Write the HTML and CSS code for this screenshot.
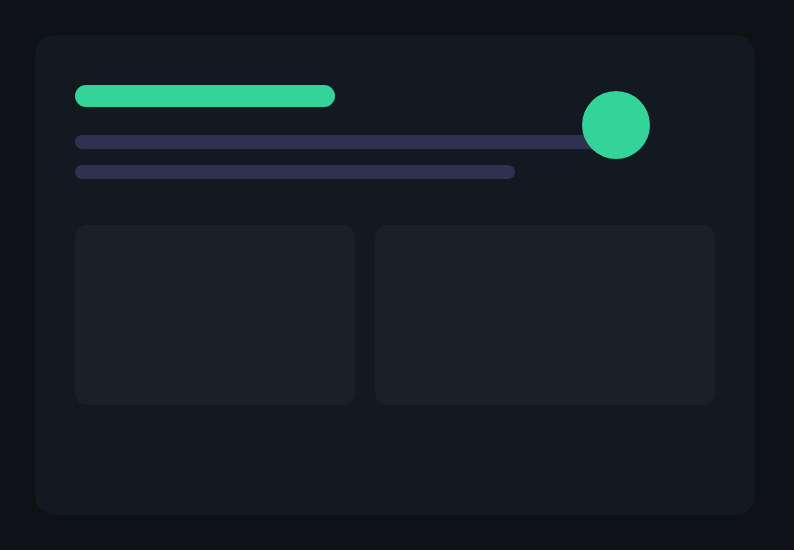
FILE: index.html
```html
<!DOCTYPE html>
<html lang="en">
<head>
    <meta charset="UTF-8">
    <meta name="viewport" content="width=device-width, initial-scale=1.0">
    <title>Skeleton</title>
    <link rel="stylesheet" href="styles.css">
</head>
<body>

    <!-- 카드 -->
    <div class="card">
        <div class="title-bar"></div>
        <div class="line line-long"></div>
        <div class="line line-short"></div>

        <!-- 하단 박스 -->
        <div class="tiles">
            <div class="tile"></div>
            <div class="tile"></div>
        </div>

        <div class="avatar"></div>
    </div>

</body>
</html>
```

FILE: styles.css
```css
* {
    margin: 0;
    padding: 0;
    box-sizing: border-box;
}

body {
    font-family: "Liberation Sans", Arial, sans-serif;
    background-color: #0e1116;
    width: 794px;
    height: 550px;
    padding: 35px;
    overflow: hidden;
}

/* 카드 */
.card {
    position: relative;
    width: 720px;
    height: 480px;
    padding: 50px 40px 40px;
    background-color: #131920;
    border-radius: 20px;
}

.title-bar {
    width: 260px;
    height: 22px;
    background-color: #34d399;
    border-radius: 11px;
    margin-bottom: 28px;
}

.line {
    height: 14px;
    background-color: #2e3250;
    border-radius: 7px;
}

.line-long {
    width: 540px;
    margin-bottom: 16px;
}

.line-short {
    width: 440px;
}

/* 하단 박스 */
.tiles {
    display: grid;
    grid-template-columns: 280px 340px;
    gap: 20px;
    margin-top: 46px;
}

.tile {
    height: 180px;
    background-color: #1b1f2a;
    border-radius: 12px;
}

.avatar {
    position: absolute;
    left: 547px;
    top: 56px;
    width: 68px;
    height: 68px;
    border-radius: 50%;
    background-color: #34d399;
}
```
